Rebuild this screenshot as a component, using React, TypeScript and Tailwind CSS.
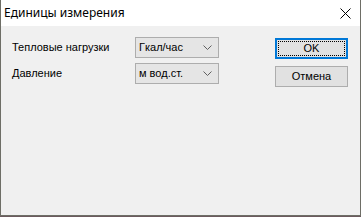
import React from "react";

function Chevron() {
  return (
    <svg width="9" height="5" viewBox="0 0 9 5" className="shrink-0">
      <path d="M0.5 0.5 L4.5 4.5 L8.5 0.5" fill="none" stroke="#606060" strokeWidth="1" />
    </svg>
  );
}

function Combo({ value }: { value: string }) {
  return (
    <div className="flex h-[21px] w-[84px] items-center justify-between border border-[#adadad] bg-[#e5e5e5] pl-[3px] pr-[6px] text-[11px] text-black">
      <span>{value}</span>
      <Chevron />
    </div>
  );
}

export default function App() {
  return (
    <div
      className="flex h-[217px] w-[361px] flex-col bg-[#6b5a5e]"
      style={{ fontFamily: '"Liberation Sans", Arial, sans-serif' }}
    >
      <div className="flex h-[216px] w-[361px] flex-col border border-t-0 border-[#6e6e66] bg-[#f0f0f0]">
        <div className="flex h-[26px] items-center justify-between bg-white pl-[3px] pr-[9px]">
          <span
            className="text-[12px] text-black"
            style={{ fontFamily: '"Noto Sans", "Open Sans", sans-serif' }}
          >
            Единицы измерения
          </span>
          <svg width="11" height="11" viewBox="0 0 11 11">
            <path d="M0.5 0.5 L10.5 10.5 M10.5 0.5 L0.5 10.5" stroke="#000" strokeWidth="1" />
          </svg>
        </div>
        <div className="flex flex-1 pl-[11px] pr-[12px] pt-[11px]">
          <div className="grid grid-cols-[123px_84px] content-start gap-y-[5px] text-[11px] text-black">
            <div className="flex h-[21px] items-center">Тепловые нагрузки</div>
            <Combo value="Гкал/час" />
            <div className="flex h-[21px] items-center">Давление</div>
            <Combo value="м вод.ст." />
          </div>
          <div className="ml-auto flex flex-col gap-[7px] pt-[1px]">
            <div className="flex h-[21px] w-[73px] items-center justify-center border-2 border-[#0078d7] bg-[#e1e1e1] p-[1px]">
              <div className="flex h-full w-full items-center justify-center border border-dotted border-black text-[11px] text-black">
                OK
              </div>
            </div>
            <div className="flex h-[21px] w-[73px] items-center justify-center border border-[#adadad] bg-[#e1e1e1] text-[11px] text-black">
              Отмена
            </div>
          </div>
        </div>
      </div>
    </div>
  );
}
